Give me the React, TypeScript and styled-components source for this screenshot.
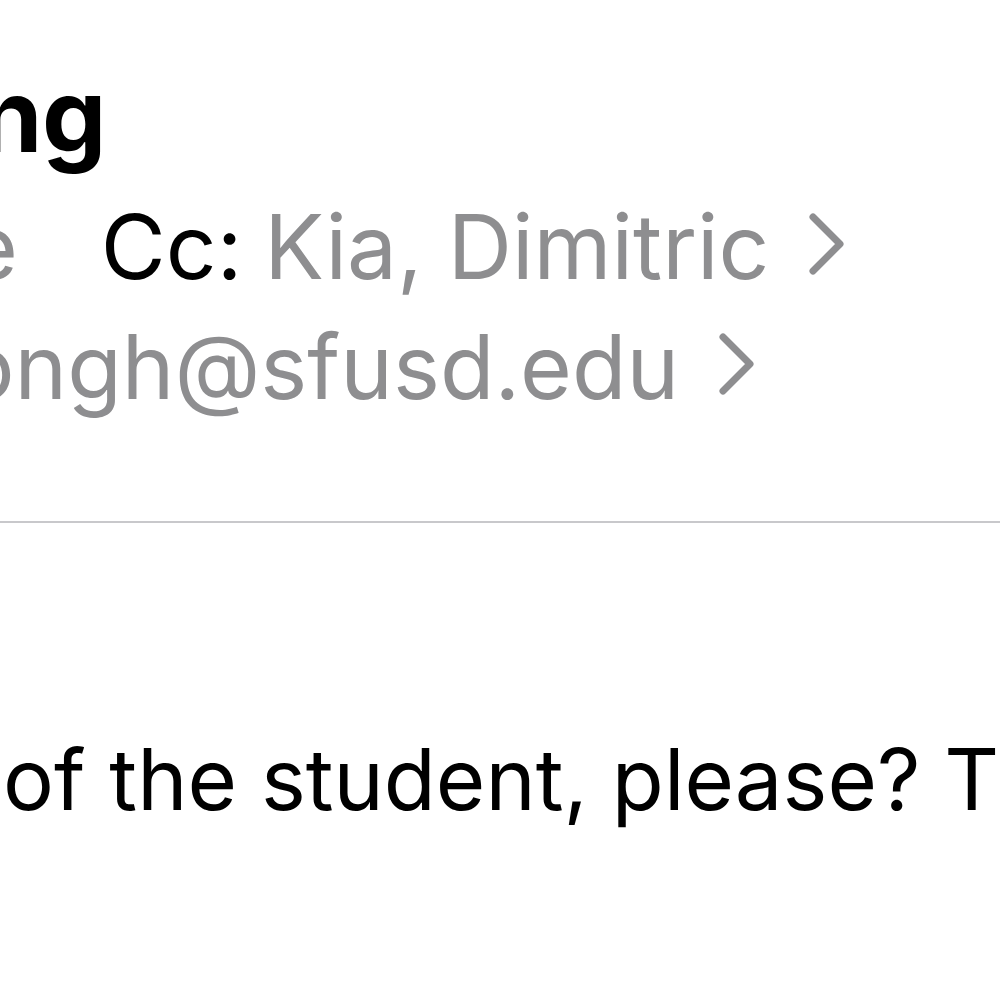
import React from 'react';
import styled, { createGlobalStyle } from 'styled-components';

const GlobalStyle = createGlobalStyle`
  html, body {
    margin: 0;
    padding: 0;
    background: #ffffff;
    overflow: hidden;
  }
  body {
    font-family: Inter, "Liberation Sans", Arial, sans-serif;
    -webkit-font-smoothing: antialiased;
  }
`;

const Screen = styled.div`
  width: 1000px;
  height: 1000px;
  overflow: hidden;
  background: #ffffff;
  display: flex;
  flex-direction: column;
`;

const Header = styled.header`
  display: flex;
  flex-direction: column;
  padding-top: 55px;
`;

const Subject = styled.h1<{ $shift: number }>`
  margin: 0 0 12px ${(p) => p.$shift}px;
  font-size: 102px;
  font-weight: 700;
  line-height: 120px;
  color: #000000;
  white-space: nowrap;
  letter-spacing: -0.5px;
`;

const MetaRow = styled.div<{ $shift: number }>`
  display: flex;
  align-items: center;
  margin-left: ${(p) => p.$shift}px;
  height: 120px;
  font-size: 89px;
  line-height: 120px;
  white-space: nowrap;
`;

const Label = styled.span`
  color: #000000;
  margin-right: 22px;
`;

const Value = styled.span<{ $gap?: number }>`
  color: #8e8e90;
  margin-right: ${(p) => p.$gap ?? 0}px;
`;

const Chevron = styled.svg`
  flex: none;
  margin-left: 40px;
  margin-top: -6px;
`;

const Divider = styled.hr`
  margin: 94px 0 0;
  border: none;
  height: 2px;
  background: #c8c8cb;
`;

const Body = styled.p<{ $shift: number }>`
  margin: 197px 0 0 ${(p) => p.$shift}px;
  font-size: 85px;
  line-height: 120px;
  color: #000000;
  white-space: nowrap;
`;

const More = () => (
  <Chevron width="36" height="62" viewBox="0 0 36 62">
    <path
      d="M4 4 L31 31 L4 58"
      fill="none"
      stroke="#8e8e90"
      strokeWidth="7"
      strokeLinecap="round"
      strokeLinejoin="round"
    />
  </Chevron>
);

export default function App() {
  return (
    <>
      <GlobalStyle />
      <Screen>
        <Header>
          <Subject $shift={-300}>Meeting</Subject>
          <MetaRow $shift={-486}>
            <Label>To:</Label>
            <Value $gap={83}>Michelle</Value>
            <Label>Cc:</Label>
            <Value>Kia, Dimitric</Value>
            <More />
          </MetaRow>
          <MetaRow $shift={-154}>
            <Value>truongh@sfusd.edu</Value>
            <More />
          </MetaRow>
        </Header>
        <Divider />
        <Body $shift={-1194}>Could you send me the name of the student, please? Thank you.</Body>
      </Screen>
    </>
  );
}
